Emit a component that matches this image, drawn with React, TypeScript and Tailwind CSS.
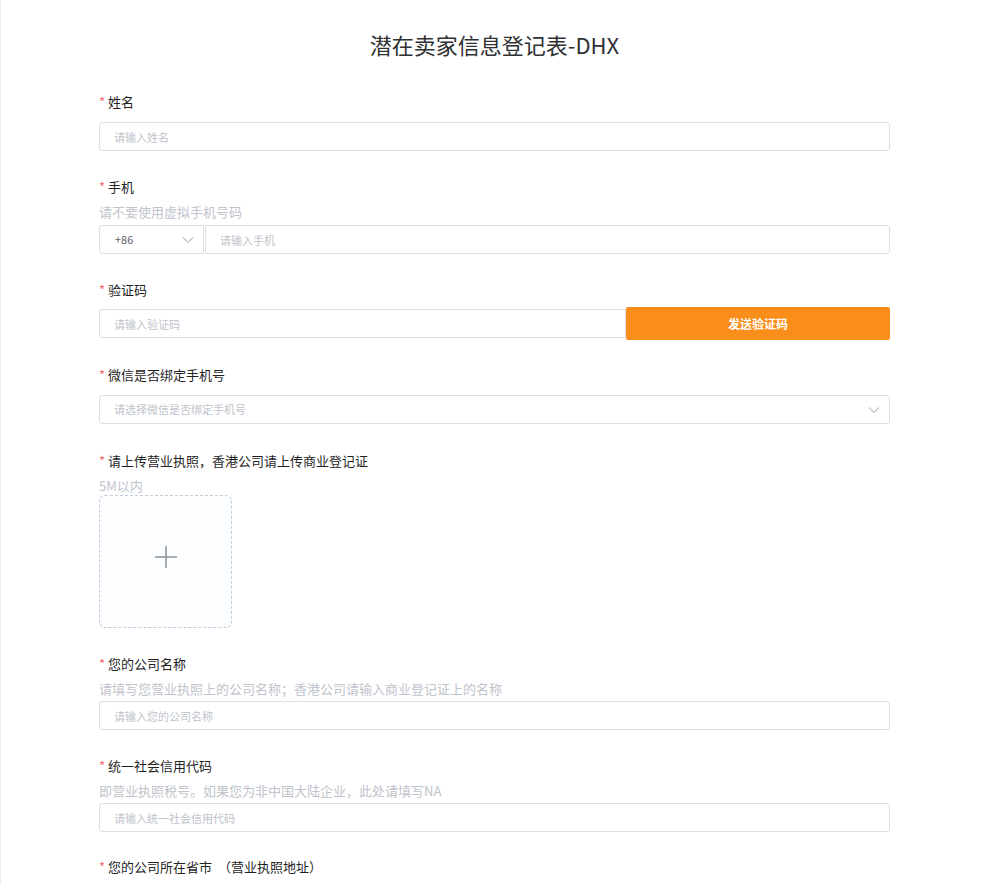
import React from "react";

const font = { fontFamily: '"Microsoft YaHei", "Noto Sans CJK SC", "Noto Sans", sans-serif' };

function Label({ children }: { children: React.ReactNode }) {
  return (
    <div className="h-5 leading-5 text-[13px] text-[#1f1f1f] flex items-center">
      <span className="text-[#f56c6c] mr-[3px] text-[13px]">*</span>
      <span>{children}</span>
    </div>
  );
}

function Hint({ children }: { children: React.ReactNode }) {
  return <div className="mt-[5px] h-5 leading-5 text-[13px] text-[#c0c4cc]">{children}</div>;
}

function TextInput({ placeholder, className = "" }: { placeholder: string; className?: string }) {
  return (
    <input
      placeholder={placeholder}
      className={`h-[29px] border border-[#dcdfe6] rounded-[3px] px-[14px] text-[11px] text-[#606266] placeholder:text-[#c0c4cc] outline-none bg-white ${className}`}
      style={font}
    />
  );
}

function Chevron({ className = "" }: { className?: string }) {
  return (
    <svg width="12" height="8" viewBox="0 0 12 8" className={className} fill="none">
      <path d="M1 1.5 L6 6.5 L11 1.5" stroke="#c0c4cc" strokeWidth="1.2" />
    </svg>
  );
}

export default function App() {
  return (
    <div className="min-h-[885px] bg-white shadow-[inset_1px_0_0_#eeeeee]" style={font}>
      <div className="w-[791px] mx-auto pt-[29px]">
        <h1 className="text-[22px] leading-[30px] text-[#303133] text-center font-normal">潜在卖家信息登记表-DHX</h1>

        <div className="mt-[33px]">
          <Label>姓名</Label>
          <TextInput placeholder="请输入姓名" className="mt-[10px] w-full block" />
        </div>

        <div className="mt-[26px]">
          <Label>手机</Label>
          <Hint>请不要使用虚拟手机号码</Hint>
          <div className="mt-[3px] flex h-[29px]">
            <div className="w-[105px] h-[29px] border border-[#dcdfe6] rounded-l-[3px] flex items-center justify-between pl-[15px] pr-[9px] text-[11px] text-[#606266]">
              <span>+86</span>
              <Chevron />
            </div>
            <TextInput placeholder="请输入手机" className="flex-1 ml-px rounded-l-none" />
          </div>
        </div>

        <div className="mt-[26px]">
          <Label>验证码</Label>
          <div className="mt-[7px] flex items-center h-[33px]">
            <TextInput placeholder="请输入验证码" className="w-[527px] h-[28px] rounded-r-none" />
            <button className="flex-1 h-[33px] bg-[#f98e1b] rounded-[2px] text-white text-[12px] font-bold">发送验证码</button>
          </div>
        </div>

        <div className="mt-[25px]">
          <Label>微信是否绑定手机号</Label>
          <div className="mt-[10px] h-[29px] border border-[#dcdfe6] rounded-[3px] flex items-center justify-between pl-[14px] pr-[9px]">
            <span className="text-[11px] text-[#c0c4cc]">请选择微信是否绑定手机号</span>
            <Chevron />
          </div>
        </div>

        <div className="mt-[27px]">
          <Label>请上传营业执照，香港公司请上传商业登记证</Label>
          <Hint>5M以内</Hint>
          <div className="-mt-px w-[133px] h-[133px] border border-dashed border-[#c0ccda] rounded-[6px] bg-[#fbfdff] flex items-center justify-center">
            <svg width="22" height="22" viewBox="0 0 22 22" className="mb-[9px]">
              <path d="M11 0 V22 M0 11 H22" stroke="#8c939d" strokeWidth="1.5" />
            </svg>
          </div>
        </div>

        <div className="mt-[26px]">
          <Label>您的公司名称</Label>
          <Hint>请填写您营业执照上的公司名称；香港公司请输入商业登记证上的名称</Hint>
          <TextInput placeholder="请输入您的公司名称" className="mt-[2px] w-full block" />
        </div>

        <div className="mt-[26px]">
          <Label>统一社会信用代码</Label>
          <Hint>即营业执照税号。如果您为非中国大陆企业，此处请填写NA</Hint>
          <TextInput placeholder="请输入统一社会信用代码" className="mt-[2px] w-full block" />
        </div>

        <div className="mt-[25px]">
          <Label>您的公司所在省市&nbsp;&nbsp;（营业执照地址）</Label>
        </div>
      </div>
    </div>
  );
}
